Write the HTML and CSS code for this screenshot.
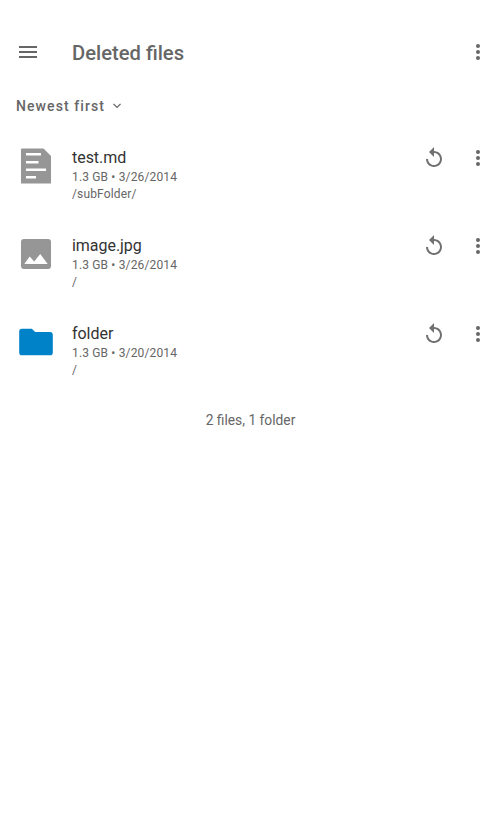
FILE: index.html
```html
<!DOCTYPE html>
<html lang="en">
<head>
<meta charset="utf-8">
<title>Deleted files</title>
<link rel="stylesheet" href="styles.css">
</head>
<body>
<svg width="0" height="0" class="defs">
  <symbol id="more" viewBox="0 0 24 24"><path d="M12 8a2 2 0 1 0 0-4 2 2 0 0 0 0 4zm0 2a2 2 0 1 0 0 4 2 2 0 0 0 0-4zm0 6a2 2 0 1 0 0 4 2 2 0 0 0 0-4z"/></symbol>
  <symbol id="restore" viewBox="0 0 24 24"><path d="M12 5V1L7 6l5 5V7c3.31 0 6 2.69 6 6s-2.69 6-6 6-6-2.69-6-6H4c0 4.42 3.58 8 8 8s8-3.58 8-8-3.58-8-8-8z"/></symbol>
</svg>
<header class="toolbar">
  <svg class="icon" viewBox="0 0 24 24"><path d="M3 18h18v-2H3v2zm0-5h18v-2H3v2zm0-7v2h18V6H3z"/></svg>
  <h1 class="title">Deleted files</h1>
  <svg class="icon more"><use href="#more"/></svg>
</header>
<div class="sort">
  <span>Newest first</span>
  <svg class="chevron" viewBox="0 0 24 24"><path d="M7.41 8.09 12 12.67l4.59-4.58L18 9.500l-6 6-6-6z"/></svg>
</div>
<main class="list">
  <article class="row">
    <svg class="thumb" viewBox="0 0 40 40"><path fill="#969696" d="M6 2.500h21.500L35 10v27.500H5V3.500a1 1 0 0 1 1-1z"/><path fill="#fff" d="M10 7h15v2.500H10zM10 15h12.500v2.500H10zM10 22.500h20V25H10zM10 30h10v2.500H10z"/></svg>
    <div class="info"><h2 class="name">test.md</h2><p class="meta">1.3 GB • 3/26/2014</p><p class="meta">/subFolder/</p></div>
    <svg class="icon restore"><use href="#restore"/></svg>
    <svg class="icon more"><use href="#more"/></svg>
  </article>
  <article class="row">
    <svg class="thumb" viewBox="0 0 40 40"><path fill="#969696" fill-rule="evenodd" d="M8 5h24a3 3 0 0 1 3 3v24a3 3 0 0 1-3 3H8a3 3 0 0 1-3-3V8a3 3 0 0 1 3-3zM8.300 30h23.400L24.200 20l-6 7.500-4.500-5z"/></svg>
    <div class="info"><h2 class="name">image.jpg</h2><p class="meta">1.3 GB • 3/26/2014</p><p class="meta">/</p></div>
    <svg class="icon restore"><use href="#restore"/></svg>
    <svg class="icon more"><use href="#more"/></svg>
  </article>
  <article class="row">
    <svg class="thumb" viewBox="0 0 40 40"><path fill="#0082c9" d="M6 6.700h9.800l3.400 3.300h14.700a2.900 2.900 0 0 1 2.900 2.900v17.500a2.900 2.900 0 0 1-2.900 2.900H6.100a2.900 2.900 0 0 1-2.900-2.900V9.500A2.800 2.800 0 0 1 6 6.700z"/></svg>
    <div class="info"><h2 class="name">folder</h2><p class="meta">1.3 GB • 3/20/2014</p><p class="meta">/</p></div>
    <svg class="icon restore"><use href="#restore"/></svg>
    <svg class="icon more"><use href="#more"/></svg>
  </article>
</main>
<footer class="summary">2 files, 1 folder</footer>
</body>
</html>
```

FILE: styles.css
```css
* { box-sizing: border-box; margin: 0; padding: 0; }
body { background: #fff; color: #666; font-family: Roboto, sans-serif; padding-top: 24px; min-height: 833px; }
.defs { display: none; }
.icon { width: 24px; height: 24px; flex: none; fill: #666; }
.toolbar { display: flex; align-items: center; height: 56px; padding: 0 10px 0 16px; }
.title { flex: 1; margin-left: 32px; font-size: 20.2px; font-weight: 500; line-height: 24px; padding-top: 2px; }
.sort { display: flex; align-items: center; height: 52px; padding-left: 16px; font-size: 14px; font-weight: 500; letter-spacing: 1.08px; }
.chevron { width: 16px; height: 16px; margin-left: 4px; fill: #666; }
.list { display: flex; flex-direction: column; }
.row { display: flex; height: 88px; padding: 14px 10px 0 16px; }
.thumb { width: 40px; height: 40px; flex: none; }
.info { flex: 1; margin-left: 16px; padding-top: 2px; }
.name { color: #333; font-size: 16px; font-weight: 400; line-height: 20px; margin-bottom: 1px; letter-spacing: -.04px; }
.meta { font-size: 12px; line-height: 17px; letter-spacing: .15px; }
.row .restore { fill: #707070; }
.row .more { margin-left: 20px; }
.summary { margin-top: 16px; text-align: center; font-size: 13.8px; line-height: 17px; padding-left: 1px; }
```
